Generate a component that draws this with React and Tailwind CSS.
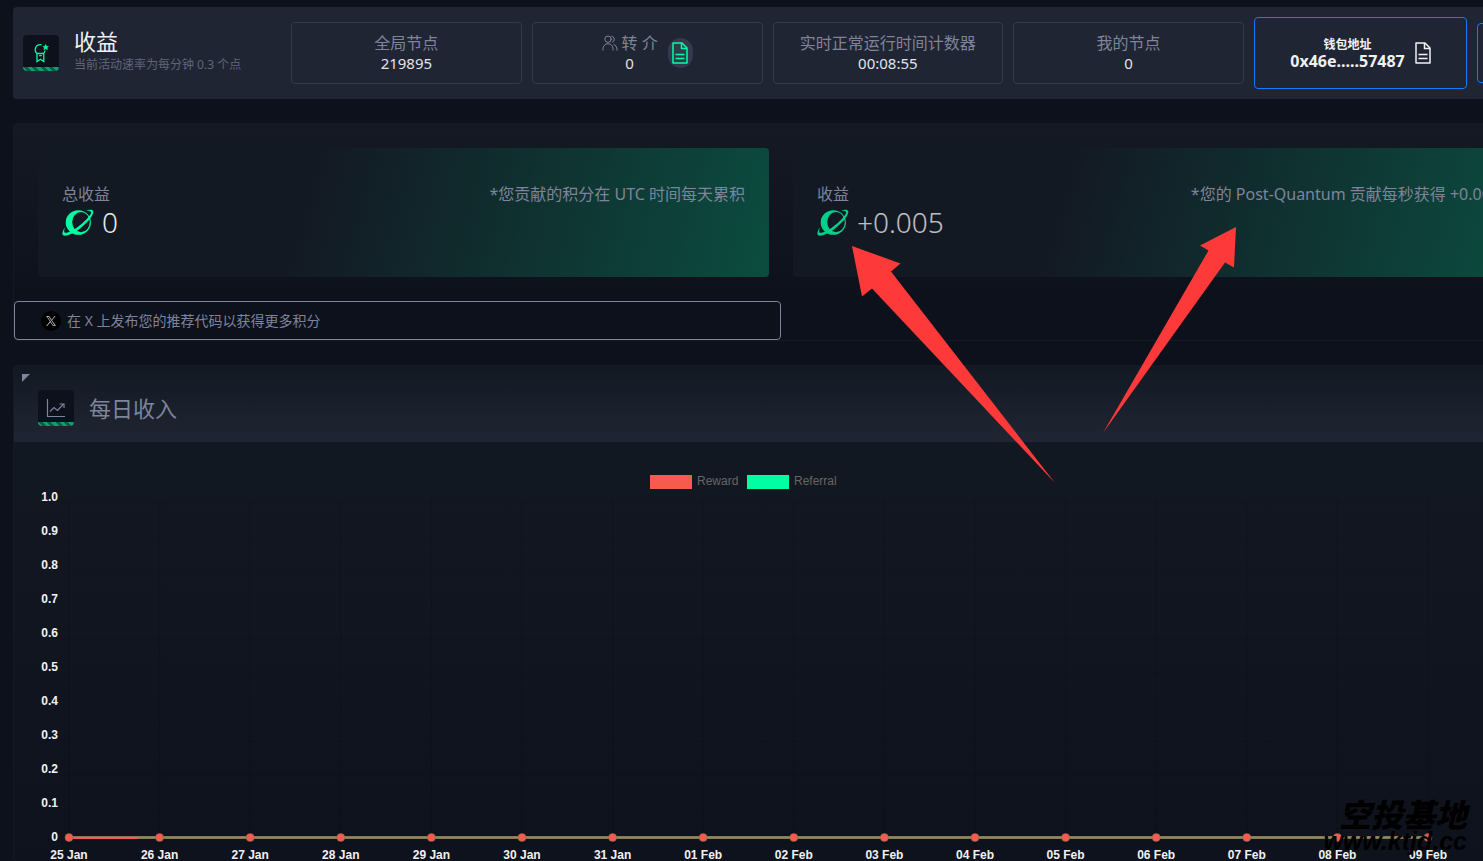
import React from 'react';

const days = [
    '25 Jan', '26 Jan', '27 Jan', '28 Jan', '29 Jan', '30 Jan', '31 Jan', '01 Feb',
    '02 Feb', '03 Feb', '04 Feb', '05 Feb', '06 Feb', '07 Feb', '08 Feb', '09 Feb',
];
const ticks = ['1.0', '0.9', '0.8', '0.7', '0.6', '0.5', '0.4', '0.3', '0.2', '0.1', '0'];

function DocIcon({ className }) {
    return (
        <svg viewBox="0 0 16 22" className={className} fill="none" stroke="currentColor" strokeWidth="1.5" aria-hidden="true">
            <path d="M1 1h9l5 5v15H1z" strokeLinejoin="round" />
            <path d="M9.5 1v5.5H15" />
            <path d="M3.5 12.5h9M3.5 16.5h9" />
        </svg>
    );
}

function PlanetIcon({ className }) {
    return (
        <svg viewBox="0 0 32 27" className={className} fill="currentColor" aria-hidden="true">
            <path fillRule="evenodd" d="M16.300 1.200a12.600 12.300 0 1 0 0 24.600a12.600 12.300 0 1 0 0-24.600zM19 3a8.800 10.100 0 1 1 0 20.200a8.800 10.100 0 1 1 0-20.200z" />
            <path d="M24 1.800C28 .2 32.200 .2 31.200 4C29.500 9 24 15 17.500 20C11 25 3 28.200 .8 26C-.2 24.500 .8 21.500 3 18.200C2.100 21.500 1.700 23.300 3 23.800C6 24.200 11.500 21.300 16 17.800C22 13.200 28 7.500 29.200 3.800C29.600 2.200 27.500 1.600 24 1.800z" />
        </svg>
    );
}

function MedalIcon() {
    return (
        <svg viewBox="0 0 16 20" className="w-4 h-5" fill="none" stroke="currentColor" strokeWidth="1.3" aria-hidden="true">
            <path d="M8.500 1.700H7.200A5 5 0 0 0 4 10.500h6.500A5 5 0 0 0 12 7.500" />
            <path d="M4 10.500v8l3.500-2.200 3.300 2.200v-8" />
            <path d="M6.200 12.700h2.600" />
            <path d="m12.700 1.200.9 2 2.100.2-1.600 1.400.5 2.100-1.900-1.100-1.900 1.100.5-2.100-1.600-1.400 2.100-.2z" fill="currentColor" strokeWidth=".3" />
        </svg>
    );
}

function UsersIcon() {
    return (
        <svg viewBox="0 0 16 16" className="w-4 h-4" fill="none" stroke="currentColor" strokeLinecap="round" aria-hidden="true">
            <circle cx="6" cy="4.200" r="3.200" />
            <path d="M1 15.200v-1.500a5 5 0 0 1 10 0v1.500" />
            <path d="M9.800 1.200a3.200 3.200 0 0 1 .7 6M12 9.500a5 5 0 0 1 3 4.500v1.200" />
        </svg>
    );
}

function ChartIcon() {
    return (
        <svg viewBox="0 0 20 20" className="w-5 h-5" fill="none" stroke="currentColor" strokeWidth="1.2" aria-hidden="true">
            <path d="M1.500 1v17.500H19" />
            <path d="m4 13.500 4-4 3.500 3L17.500 6" />
            <path d="M13.500 6h4.500v4" />
        </svg>
    );
}

function IconTile({ children, className = '' }) {
    return (
        <div className={`w-9 h-9 rounded bg-[#0d111b] flex flex-col overflow-hidden shrink-0 ${className}`}>
            <div className="flex-1 pt-1 flex items-center justify-center">{children}</div>
            <div className="h-1 bg-[repeating-linear-gradient(45deg,#0d9f6e_0,#0d9f6e_3px,#0a5c46_3px,#0a5c46_6px)]"></div>
        </div>
    );
}

function StatBox({ label, value, children }) {
    return (
        <div className="flex-1 h-[62px] border border-[#333a4b] rounded flex items-center justify-center gap-2.5">
            <div className="text-center">
                <div className="flex items-center justify-center gap-1 text-base leading-5 text-[#7f849b]">{label}</div>
                <div className="text-[15px] leading-5 text-[#e2e4ea]">{value}</div>
            </div>
            {children}
        </div>
    );
}

function EarningCard({ label, value, note, dim }) {
    return (
        <div className="h-[129px] px-6 pt-9 rounded flex justify-between text-[#7f849b] bg-[linear-gradient(105deg,#131923_37%,#0f3432_70%,#0b4c3f_100%)]">
            <div>
                <div className="text-base leading-5">{label}</div>
                <div className={`flex items-center gap-2 ${dim ? 'opacity-80' : ''}`}>
                    <PlanetIcon className="w-8 h-[27px] text-[#00ffa3]" />
                    <span className="text-[28px] leading-9 font-light text-[#e8e8ec]">{value}</span>
                </div>
            </div>
            <p className="text-base leading-5 whitespace-nowrap">{note}</p>
        </div>
    );
}

function IncomeChart() {
    const x = (i) => 31 + i * 90.6;
    const y = (i) => 55 + i * 34;
    return (
        <svg viewBox="0 0 1411 419" className="block w-full font-['Liberation_Sans',sans-serif] text-xs" role="img" aria-label="每日收入">
            <rect x="612" y="33" width="42" height="14" fill="#f65b4d" />
            <text x="659" y="43" fill="#666666">Reward</text>
            <rect x="709" y="33" width="42" height="14" fill="#00ffa3" />
            <text x="756" y="43" fill="#666666">Referral</text>
            {ticks.map((t, i) => (
                <g key={t}>
                    <path d={`M23 ${y(i) + 6}H${x(15)}`} stroke="#000000" strokeOpacity="0.08" />
                    <text x="20" y={y(i) + 4} textAnchor="end" fontWeight="bold" fill="#f1f1f3">{t}</text>
                </g>
            ))}
            {days.map((d, i) => (
                <path key={d} d={`M${x(i)} 57V403`} stroke="#000000" strokeOpacity="0.12" />
            ))}
            <path d={`M${x(0)} 395.500H${x(15)}`} stroke="#7f7b58" strokeWidth="3" />
            <path d={`M${x(0)} 395.500H${x(15)}`} stroke="#d46a50" />
            <path d={`M${x(0)} 396H100`} stroke="#f65b4d" strokeWidth="2" />
            {days.map((d, i) => (
                <g key={d}>
                    <circle cx={x(i)} cy="395.500" r="4" fill="#f65b4d" stroke="#7f6a50" strokeWidth=".5" />
                    <text x={x(i)} y="417" textAnchor="middle" fontWeight="bold" fill="#f1f1f3">{d}</text>
                </g>
            ))}
        </svg>
    );
}

export default function App() {
    return (
        <div className="relative h-screen overflow-hidden bg-[#0d111b] font-['Noto_Sans','Noto_Sans_CJK_SC',sans-serif]">
            <div className="ml-[13px] -mr-[66px] pt-[7px] flex flex-col gap-6">
                {/* Header */}
                <header className="h-[92px] px-2.5 rounded bg-[#1f2532] flex items-center">
                    <div className="w-[268px] shrink-0 flex items-center gap-[15px]">
                        <IconTile className="text-[#00ffa3]">
                            <MedalIcon />
                        </IconTile>
                        <div className="pb-2">
                            <h1 className="text-[22px] leading-8 text-[#f1f1f3]">收益</h1>
                            <p className="text-xs leading-4 text-[#5f647b]">当前活动速率为每分钟 0.3 个点</p>
                        </div>
                    </div>
                    <div className="flex-1 flex items-center gap-2.5">
                        <StatBox label="全局节点" value="219895" />
                        <StatBox label={<><UsersIcon />转 介</>} value="0">
                            <button type="button" aria-label="复制推荐链接" className="w-[25px] h-[30px] rounded-full bg-[#333a4b] text-[#00ffa3] flex items-center justify-center">
                                <DocIcon className="w-4 h-[22px]" />
                            </button>
                        </StatBox>
                        <StatBox label="实时正常运行时间计数器" value="00:08:55" />
                        <StatBox label="我的节点" value="0" />
                        <button type="button" className="w-[213px] h-[72px] shrink-0 border border-[#1677ff] rounded flex items-center justify-center gap-2.5 text-[#f1f1f3] font-bold">
                            <span className="flex flex-col items-center">
                                <span className="text-xs leading-4">钱包地址</span>
                                <span className="text-base leading-4">0x46e.....57487</span>
                            </span>
                            <DocIcon className="w-4 h-[22px]" />
                        </button>
                        <button type="button" aria-label="断开连接" className="w-[62px] h-[60px] shrink-0 border border-[#1677ff] rounded"></button>
                    </div>
                </header>

                {/* Earnings */}
                <section className="border border-[#141924] rounded pt-6 bg-[linear-gradient(#141923,#0d111b_80%)]">
                    <div className="grid grid-cols-2 gap-6 px-6">
                        <EarningCard label="总收益" value="0" note="*您贡献的积分在 UTC 时间每天累积" />
                        <EarningCard label="收益" value="+0.005" note="*您的 Post-Quantum 贡献每秒获得 +0.005" dim />
                    </div>
                    <button type="button" className="mt-6 w-1/2 h-[39px] px-[26px] border border-[#7f849b] rounded flex items-center gap-1.5 text-sm text-[#7f849b]">
                        <span className="w-5 h-5 rounded-full bg-black flex items-center justify-center">
                            <svg viewBox="0 0 24 24" className="w-2.5 h-2.5" fill="#d4d4d8" aria-hidden="true">
                                <path d="M14.300 10.200 23 0h-2.100l-7.500 8.800L7.300 0H.4l9.100 13.300L.4 24h2.100l8-9.300 6.300 9.300h7zM11.500 13.500l-.9-1.300L3.200 1.600h3.200l5.900 8.500.9 1.300 7.700 11.100h-3.200z" />
                            </svg>
                        </span>
                        在 X 上发布您的推荐代码以获得更多积分
                    </button>
                </section>

                {/* Daily income */}
                <section className="border border-[#141924] rounded bg-[linear-gradient(#131923,#0e121c)]">
                    <div className="relative h-[76px] pt-2 px-6 flex items-center gap-[15px] bg-[linear-gradient(#131923,#1f2532)] text-[#7f849b]">
                        <svg viewBox="0 0 8 8" className="absolute left-2 top-2 w-2 h-2" fill="currentColor" aria-hidden="true">
                            <path d="M0 0h8L0 8z" />
                        </svg>
                        <IconTile>
                            <ChartIcon />
                        </IconTile>
                        <h2 className="text-[22px] leading-8">每日收入</h2>
                    </div>
                    <div className="pl-6 pr-[99px]">
                        <IncomeChart />
                    </div>
                </section>
            </div>

            {/* Pointer arrows */}
            <svg viewBox="0 0 384 257" className="absolute left-[852px] top-[227px] w-[384px] h-[257px] pointer-events-none" fill="#fd3a39" aria-hidden="true">
                <path d="M0 19 48.500 36.500 39 44.500 203 256 20 61.500 10 69.500z" />
                <path d="M384 0 348 18.500 356.500 23.500 251 206 373 35.500 382 40.500z" />
            </svg>

            {/* Watermark */}
            <div className="absolute right-4 bottom-2 text-right text-black italic font-black pointer-events-none">
                <div className="text-[32px] leading-7">空投基地</div>
                <div className="text-[25px] leading-6 font-['Liberation_Sans',sans-serif]">www.ktjd.cc</div>
            </div>
        </div>
    );
}
